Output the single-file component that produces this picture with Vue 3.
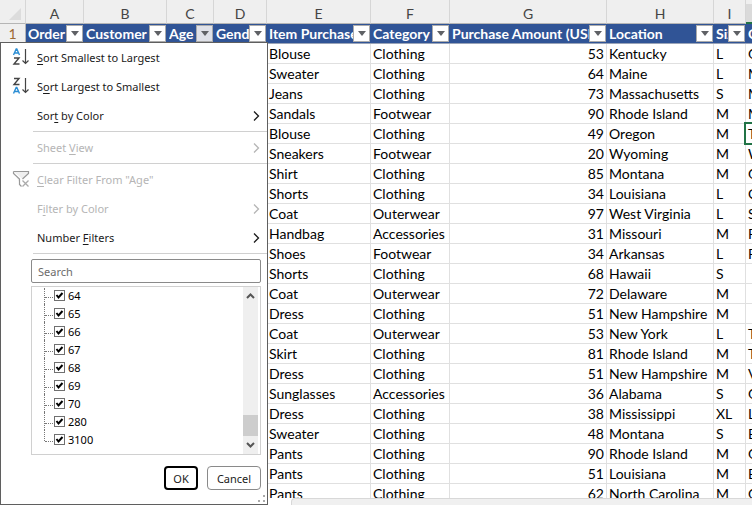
<script setup>
import { ref } from 'vue'

const columns = [
  { letter: 'A', title: 'Order', cls: 'c-a' },
  { letter: 'B', title: 'Customer', cls: 'c-b' },
  { letter: 'C', title: 'Age', cls: 'c-c', open: true },
  { letter: 'D', title: 'Gender', cls: 'c-d' },
  { letter: 'E', title: 'Item Purchased', cls: 'c-e' },
  { letter: 'F', title: 'Category', cls: 'c-f' },
  { letter: 'G', title: 'Purchase Amount (USD)', cls: 'c-g' },
  { letter: 'H', title: 'Location', cls: 'c-h' },
  { letter: 'I', title: 'Size', cls: 'c-i' },
]

const rows = [
  ['Blouse', 'Clothing', 53, 'Kentucky', 'L', 'G'],
  ['Sweater', 'Clothing', 64, 'Maine', 'L', 'M'],
  ['Jeans', 'Clothing', 73, 'Massachusetts', 'S', 'M'],
  ['Sandals', 'Footwear', 90, 'Rhode Island', 'M', 'M'],
  ['Blouse', 'Clothing', 49, 'Oregon', 'M', 'T'],
  ['Sneakers', 'Footwear', 20, 'Wyoming', 'M', 'W'],
  ['Shirt', 'Clothing', 85, 'Montana', 'M', 'G'],
  ['Shorts', 'Clothing', 34, 'Louisiana', 'L', 'C'],
  ['Coat', 'Outerwear', 97, 'West Virginia', 'L', 'S'],
  ['Handbag', 'Accessories', 31, 'Missouri', 'M', 'P'],
  ['Shoes', 'Footwear', 34, 'Arkansas', 'L', 'P'],
  ['Shorts', 'Clothing', 68, 'Hawaii', 'S', ''],
  ['Coat', 'Outerwear', 72, 'Delaware', 'M', ''],
  ['Dress', 'Clothing', 51, 'New Hampshire', 'M', ''],
  ['Coat', 'Outerwear', 53, 'New York', 'L', 'T'],
  ['Skirt', 'Clothing', 81, 'Rhode Island', 'M', 'T'],
  ['Dress', 'Clothing', 51, 'New Hampshire', 'M', 'V'],
  ['Sunglasses', 'Accessories', 36, 'Alabama', 'S', 'G'],
  ['Dress', 'Clothing', 38, 'Mississippi', 'XL', 'L'],
  ['Sweater', 'Clothing', 48, 'Montana', 'S', 'B'],
  ['Pants', 'Clothing', 90, 'Rhode Island', 'M', 'G'],
  ['Pants', 'Clothing', 51, 'Louisiana', 'M', 'B'],
  ['Pants', 'Clothing', 62, 'North Carolina', 'M', 'G'],
]

const values = ref(['64', '65', '66', '67', '68', '69', '70', '280', '3100'].map((label) => ({ label, checked: true })))
const search = ref('')
</script>

<template>
  <main class="page">
    <div class="sheet">
      <table class="grid">
        <colgroup>
          <col class="c-num" />
          <col v-for="c in columns" :key="c.letter" :class="c.cls" />
          <col />
        </colgroup>
        <thead>
          <tr class="letters">
            <th class="corner">
              <svg width="12" height="12" viewBox="0 0 12 12" aria-hidden="true"><path d="M12 0V12H0Z" fill="#dcdcdc" /></svg>
            </th>
            <th v-for="c in columns" :key="c.letter" scope="col">{{ c.letter }}</th>
            <th class="current"></th>
          </tr>
          <tr class="titles">
            <th class="rownum" scope="row">1</th>
            <th v-for="c in columns" :key="c.letter" scope="col">
              <div class="title">
                <span>{{ c.title }}</span>
                <button type="button" :class="{ open: c.open }" :aria-label="'Filter ' + c.title">
                  <svg width="8" height="5" viewBox="0 0 8 5" aria-hidden="true"><path d="M0 0H8L4 5Z" fill="#5f6165" /></svg>
                </button>
              </div>
            </th>
            <th scope="col"><div class="title"><span>C</span></div></th>
          </tr>
        </thead>
        <tbody>
          <tr v-for="(r, i) in rows" :key="i">
            <td class="rownum"></td>
            <td></td>
            <td></td>
            <td></td>
            <td></td>
            <td>{{ r[0] }}</td>
            <td>{{ r[1] }}</td>
            <td class="amount">{{ r[2] }}</td>
            <td>{{ r[3] }}</td>
            <td>{{ r[4] }}</td>
            <td :class="{ selected: i === 4 }">{{ r[5] }}</td>
          </tr>
        </tbody>
      </table>
    </div>
    <div class="scroll"></div>

    <section class="menu" aria-label="Filter menu">
      <button type="button" class="item">
        <svg class="icon" width="18" height="18" viewBox="0 0 18 18" fill="none" aria-hidden="true">
          <path d="M1.500 7L4.200 1H4.800L7.500 7M2.500 5H6.500" stroke="#2a8dd4" stroke-width="1.400" />
          <path d="M2 10H7L2 16H7.500" stroke="#444" stroke-width="1.400" />
          <path d="M13.500 1V15.500M10.500 12.500L13.500 15.500L16.500 12.500" stroke="#444" stroke-width="1.200" />
        </svg>
        <span><u>S</u>ort Smallest to Largest</span>
      </button>
      <button type="button" class="item">
        <svg class="icon" width="18" height="18" viewBox="0 0 18 18" fill="none" aria-hidden="true">
          <path d="M2 1.500H7L2 7.500H7.500" stroke="#444" stroke-width="1.400" />
          <path d="M1.500 16.500L4.200 10.500H4.800L7.500 16.500M2.500 14.500H6.500" stroke="#2a8dd4" stroke-width="1.400" />
          <path d="M13.500 1V15.500M10.500 12.500L13.500 15.500L16.500 12.500" stroke="#444" stroke-width="1.200" />
        </svg>
        <span>S<u>o</u>rt Largest to Smallest</span>
      </button>
      <button type="button" class="item">
        <span>Sor<u>t</u> by Color</span>
        <svg class="chev" width="7" height="10" viewBox="0 0 7 10" aria-hidden="true"><path d="M1 .5L5.500 5L1 9.500" /></svg>
      </button>
      <hr />
      <button type="button" class="item" disabled>
        <span>Sheet <u>V</u>iew</span>
        <svg class="chev" width="7" height="10" viewBox="0 0 7 10" aria-hidden="true"><path d="M1 .5L5.500 5L1 9.500" /></svg>
      </button>
      <hr />
      <button type="button" class="item" disabled>
        <svg class="icon" width="18" height="18" viewBox="0 0 18 18" fill="none" aria-hidden="true">
          <path d="M1.500 1.500H16.500V3.500L10.500 9M1.500 1.500V3.500L7.500 9V14.500L9.500 16.500" fill="#f0f0f0" stroke="#999" stroke-width="1.200" />
          <path d="M10.500 10.500L16.500 16.500M16.500 10.500L10.500 16.500" stroke="#aaa" stroke-width="1.300" />
        </svg>
        <span><u>C</u>lear Filter From "Age"</span>
      </button>
      <button type="button" class="item" disabled>
        <span>F<u>i</u>lter by Color</span>
        <svg class="chev" width="7" height="10" viewBox="0 0 7 10" aria-hidden="true"><path d="M1 .5L5.500 5L1 9.500" /></svg>
      </button>
      <button type="button" class="item">
        <span>Number <u>F</u>ilters</span>
        <svg class="chev" width="7" height="10" viewBox="0 0 7 10" aria-hidden="true"><path d="M1 .5L5.500 5L1 9.500" /></svg>
      </button>
      <hr />
      <div class="panel">
        <input v-model="search" class="search" type="text" placeholder="Search" aria-label="Search" />
        <div class="list">
          <ul>
            <li v-for="v in values" :key="v.label">
              <i class="branch"></i>
              <label><input v-model="v.checked" type="checkbox" /><span>{{ v.label }}</span></label>
            </li>
          </ul>
          <div class="bar">
            <svg width="9" height="6" viewBox="0 0 9 6" aria-hidden="true"><path d="M1 5L4.500 1.500L8 5" /></svg>
            <div class="thumb"></div>
            <svg width="9" height="6" viewBox="0 0 9 6" aria-hidden="true"><path d="M1 1L4.500 4.500L8 1" /></svg>
          </div>
        </div>
        <div class="actions">
          <button type="button" class="ok">OK</button>
          <button type="button" class="cancel">Cancel</button>
        </div>
      </div>
      <svg class="grip" width="8" height="8" viewBox="0 0 8 8" aria-hidden="true"><path d="M5 0h2v2h-2zM5 5h2v2h-2zM0 5h2v2h-2z" fill="#aaa" /></svg>
    </section>
  </main>
</template>

<style>
body { background: #fff; }
</style>

<style scoped>
* { box-sizing: border-box; }
.page {
  position: relative;
  display: flex;
  flex-direction: column;
  height: 100vh;
  overflow: hidden;
  font-family: Lato, "Liberation Sans", sans-serif;
  font-size: 14px;
  color: #000;
}
.sheet { flex: 1; min-height: 0; overflow: hidden; }
.grid { width: 100%; table-layout: fixed; border-collapse: separate; border-spacing: 0; }
.c-num { width: 26px; }
.c-a { width: 58px; }
.c-b { width: 83px; }
.c-c { width: 47px; }
.c-d { width: 53px; }
.c-e { width: 104px; }
.c-f { width: 79px; }
.c-g { width: 157px; }
.c-h { width: 107px; }
.c-i { width: 32px; }
td {
  height: 20px;
  padding: 0 2px;
  border-right: 1px solid #e0e0e0;
  border-bottom: 1px solid #e0e0e0;
  line-height: 19px;
  white-space: nowrap;
  overflow: hidden;
}
td.amount { text-align: right; }
td.selected { position: relative; overflow: visible; }
td.selected::before {
  content: "";
  position: absolute;
  inset: -2px -4px -2px -2px;
  border: 2px solid #217346;
}
th { padding: 0; font-weight: 400; }
.letters th {
  height: 24px;
  padding-top: 4px;
  background: #efefef;
  border-right: 1px solid #d6d6d6;
  border-bottom: 1px solid #b5b5b5;
  line-height: 18px;
  color: #444;
}
.letters th.corner { padding: 5px 4px 0 0; text-align: right; line-height: 0; }
.letters th.current {
  background: linear-gradient(#efefef, #efefef) 0 0 / 100% 4px no-repeat, #dadada;
  border-bottom: 2px solid #217346;
}
tr > :last-child, .letters th.current { border-right: 0; }
.rownum { background: #efefef; border-right: 1px solid #b5b5b5; color: #9c6a34; }
.titles th { height: 20px; border-bottom: 1px solid #9aa4b8; line-height: 19px; }
.titles th:not(.rownum) { background: #305496; color: #fff; font-weight: 700; text-align: left; }
.title { display: flex; align-items: center; height: 19px; padding-left: 2px; }
.title span { flex: 1; min-width: 0; overflow: hidden; white-space: nowrap; }
.title button {
  display: flex;
  flex: none;
  align-items: center;
  justify-content: center;
  width: 17px;
  height: 17px;
  margin-right: 1px;
  padding: 0;
  border: 1px solid #ababab;
  background: #fff;
}
.title button.open { background: #dfe1e8; }
.scroll { flex: none; height: 7px; margin-left: 291px; background: #f0f0f0; border: solid #d8d8d8; border-width: 1px 0 0 1px; border-radius: 4px 0 0 0; }

.menu {
  position: absolute;
  top: 42px;
  left: 0;
  width: 268px;
  border: 1px solid #5f5f5f;
  background: #fff;
  font-family: "Noto Sans", "Open Sans", sans-serif;
  font-size: 11px;
  color: #1a1a1a;
}
.item {
  position: relative;
  display: flex;
  align-items: center;
  justify-content: space-between;
  width: 100%;
  height: 29px;
  padding: 0 7px 0 36px;
  border: 0;
  background: none;
  font: inherit;
  color: inherit;
  text-align: left;
  white-space: nowrap;
}
.item:disabled { color: #b5b5b5; }
.icon { position: absolute; left: 11px; top: 5px; }
.chev { fill: none; stroke: currentColor; stroke-width: 1.3; }
u { text-underline-offset: 2px; }
hr { height: 1px; margin: 1px 0 1px 32px; border: 0; background: #d0d0d0; }
.panel { display: flex; flex-direction: column; padding: 4px 6px 14px 30px; }
.search { height: 24px; padding: 0 6px; border: 1px solid #8a8a8a; border-radius: 2px; font: inherit; }
.search::placeholder { color: #6b6b6b; opacity: 1; }
.list { display: flex; justify-content: space-between; margin-top: 3px; padding-right: 2px; border: 1px solid #d0d0d0; }
ul { margin: -1px 0 0; padding: 0 0 6px 12px; list-style: none; }
li { position: relative; display: flex; align-items: center; height: 18px; color: #000; }
li::before { content: ""; position: absolute; left: 0; top: 0; height: 18px; border-left: 1px dotted #777; }
li:first-child::before { top: 2px; height: 16px; }
li:last-child::before { height: 11px; }
.branch { width: 8px; margin: 4px 1px 0 1px; border-top: 1px dotted #777; }
label { display: flex; align-items: center; gap: 3px; }
label input {
  appearance: none;
  width: 11px;
  height: 11px;
  margin: 0;
  border: 1px solid #707070;
  background: #fff;
}
label input:checked {
  background: url("data:image/svg+xml,%3Csvg xmlns='http://www.w3.org/2000/svg' viewBox='0 0 9 9'%3E%3Cpath d='M1.500 4L3.500 6.500L7.500 2' fill='none' stroke='%23000' stroke-width='2'/%3E%3C/svg%3E") center / 9px 9px no-repeat #fff;
}
.bar { display: flex; flex-direction: column; align-items: center; width: 15px; padding: 6px 0; background: #efefef; }
.bar svg { fill: none; stroke: #555; stroke-width: 2; }
.thumb { width: 100%; height: 21px; margin: auto 0 6px; background: #cdcdcd; }
.actions { display: flex; justify-content: flex-end; gap: 9px; margin-top: 11px; }
.actions button {
  height: 24px;
  padding: 0;
  border: 1px solid #8a8a8a;
  border-radius: 4px;
  background: #fff;
  font: inherit;
  color: inherit;
}
.actions .ok { min-width: 34px; border: 2px solid #000; }
.actions .cancel { min-width: 54px; }
.grip { position: absolute; right: 1px; bottom: 1px; }
</style>
